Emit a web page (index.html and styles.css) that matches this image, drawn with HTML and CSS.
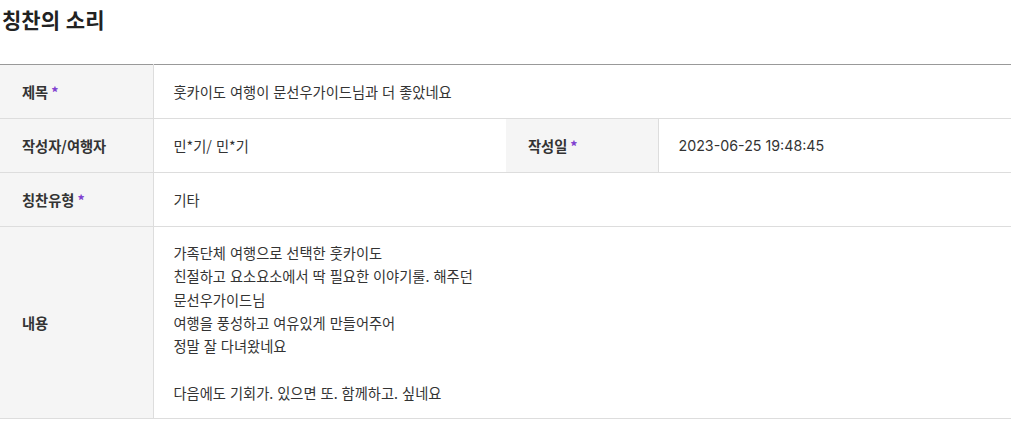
FILE: index.html
```html
<!DOCTYPE html>
<html lang="ko">
<head>
<meta charset="utf-8">
<link rel="stylesheet" href="styles.css">
</head>
<body>
<div class="page">
  <h2 class="title">칭찬의 소리</h2>
  <table class="view">
    <colgroup>
      <col class="c-th"><col class="c-td1"><col class="c-th2"><col class="c-td2">
    </colgroup>
    <tbody>
      <tr>
        <th>제목<span class="req">*</span></th>
        <td colspan="3">훗카이도 여행이 문선우가이드님과 더 좋았네요</td>
      </tr>
      <tr>
        <th>작성자/여행자</th>
        <td>민*기/ 민*기</td>
        <th>작성일<span class="req">*</span></th>
        <td class="date">2023-06-25 19:48:45</td>
      </tr>
      <tr>
        <th>칭찬유형<span class="req">*</span></th>
        <td colspan="3">기타</td>
      </tr>
      <tr>
        <th>내용</th>
        <td colspan="3" class="content">가족단체 여행으로 선택한 훗카이도<br>친절하고 요소요소에서 딱 필요한 이야기룰. 해주던<br>문선우가이드님<br>여행을 풍성하고 여유있게 만들어주어<br>정말 잘 다녀왔네요<br><br>다음에도 기회가. 있으면 또. 함께하고. 싶네요</td>
      </tr>
    </tbody>
  </table>
</div>
</body>
</html>
```

FILE: styles.css
```css
html, body {
  margin: 0;
  padding: 0;
  background: #fff;
}
body {
  font-family: "Noto Sans CJK KR", "Noto Sans", sans-serif;
  color: #333;
}
.page {
  width: 1011px;
}
.title {
  margin: 0 0 0 2px;
  padding-top: 4px;
  height: 64px;
  box-sizing: border-box;
  font-size: 21px;
  line-height: 30px;
  font-weight: 700;
  color: #222;
}
.view {
  width: 1011px;
  border-collapse: collapse;
  table-layout: fixed;
  border-top: 1px solid #999;
}
.c-th { width: 153px; }
.c-td1 { width: 353px; }
.c-th2 { width: 152px; }
.view th, .view td {
  border-bottom: 1px solid #ddd;
  padding: 15px 20px 15px 20px;
  font-size: 14.25px;
  line-height: 23px;
  text-align: left;
  vertical-align: middle;
}
.view th {
  background: #f5f5f5;
  font-weight: 700;
  color: #333;
  padding-left: 22px;
  border-right: 1px solid #ddd;
}
.view td {
  color: #333;
}
.req {
  color: #8040d0;
  margin-left: 3px;
  font-weight: 700;
}
.date {
  font-family: Inter, Roboto, "Noto Sans CJK KR", sans-serif;
  font-size: 15px;
}
.view td.content {
  padding-top: 14px;
  padding-bottom: 14px;
  line-height: 23.33px;
}
```
